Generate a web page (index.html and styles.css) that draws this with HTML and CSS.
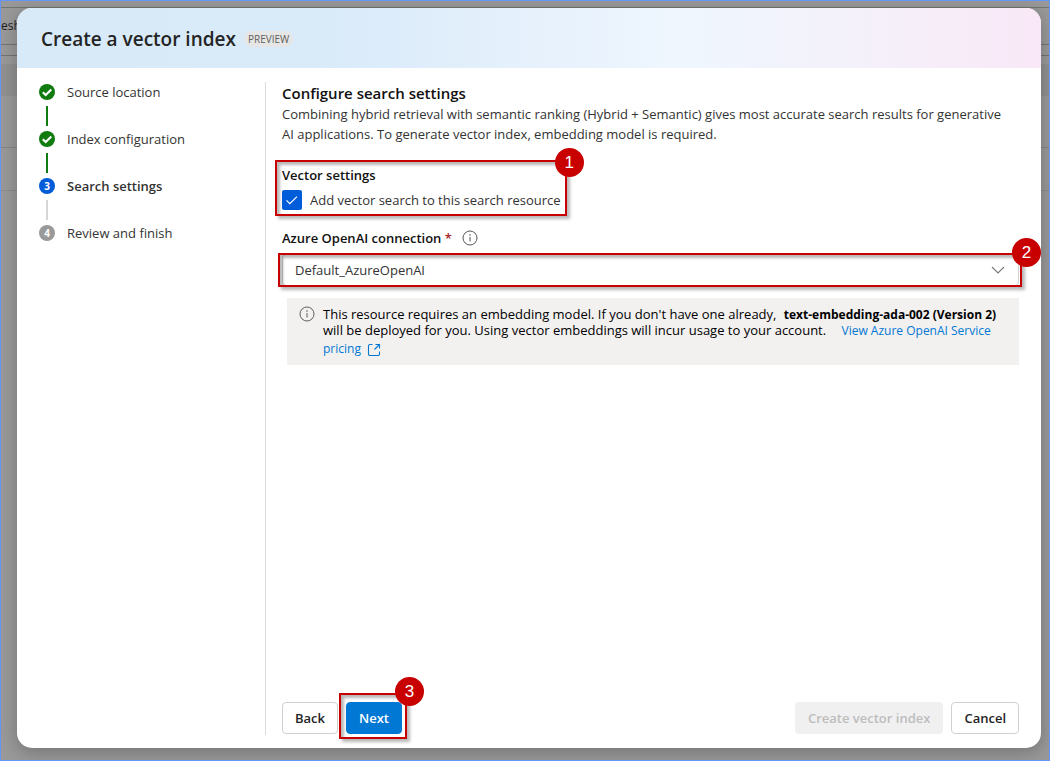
FILE: index.html
```html
<!DOCTYPE html>
<html lang="en">
<head>
<meta charset="utf-8">
<title>Create a vector index</title>
<meta name="viewport" content="width=device-width, initial-scale=1">
<link rel="stylesheet" href="styles.css">
</head>
<body class="page">
<div class="backdrop" aria-hidden="true">
  <div class="backdrop-bar"></div>
  <div class="backdrop-tools"><span class="backdrop-text">esh</span></div>
  <div class="backdrop-gap"></div>
  <div class="backdrop-head"></div>
  <div class="backdrop-row"></div>
</div>
<div class="dialog" role="dialog" aria-labelledby="dialog-title">
  <header class="dialog-header">
    <h1 class="dialog-title" id="dialog-title">Create a vector index</h1>
    <span class="tag">PREVIEW</span>
  </header>
  <div class="dialog-body">
    <ol class="steps">
      <li class="step step-done">
        <svg class="step-icon" viewBox="0 0 16 16"><circle cx="8" cy="8" r="8" fill="#107c10"/><path d="M3.800 8.200l2.900 2.800 5.600-5.600" fill="none" stroke="#fff" stroke-width="2.100"/></svg>
        <span>Source location</span>
      </li>
      <li class="step step-done">
        <svg class="step-icon" viewBox="0 0 16 16"><circle cx="8" cy="8" r="8" fill="#107c10"/><path d="M3.800 8.200l2.900 2.800 5.600-5.600" fill="none" stroke="#fff" stroke-width="2.100"/></svg>
        <span>Index configuration</span>
      </li>
      <li class="step step-current" aria-current="step">
        <span class="step-icon step-number">3</span>
        <span>Search settings</span>
      </li>
      <li class="step">
        <span class="step-icon step-number">4</span>
        <span>Review and finish</span>
      </li>
    </ol>
    <main class="content">
      <h2 class="content-title">Configure search settings</h2>
      <p class="content-text">Combining hybrid retrieval with semantic ranking (Hybrid + Semantic) gives most accurate search results for generative<br>AI applications. To generate vector index, embedding model is required.</p>
      <section class="vector marked">
        <h3 class="label">Vector settings</h3>
        <label class="check">
          <span class="check-box">
            <input class="check-input" type="checkbox" checked>
            <svg class="check-mark" viewBox="0 0 20 20"><path d="M4.500 10.400l3.300 3.300 7.200-7.100" fill="none" stroke="#fff" stroke-width="1.200"/></svg>
          </span>
          <span>Add vector search to this search resource</span>
        </label>
        <span class="frame frame-vector"><span class="pin">1</span></span>
      </section>
      <div class="field-head">
        <label class="label" for="connection">Azure OpenAI connection <span class="required">*</span></label>
        <svg class="info-icon" viewBox="0 0 16 16"><circle cx="8" cy="8" r="7" fill="none" stroke="#555" stroke-width="1"/><path d="M8 7v4.500" stroke="#555" stroke-width="1"/><circle cx="8" cy="5" r=".8" fill="#555"/></svg>
      </div>
      <div class="select-wrap marked">
        <select class="select" id="connection"><option>Default_AzureOpenAI</option></select>
        <svg class="chevron" viewBox="0 0 14 8"><path d="M1 1l6 6 6-6" fill="none" stroke="#777" stroke-width="1.100"/></svg>
        <span class="frame frame-select"><span class="pin pin-select">2</span></span>
      </div>
      <div class="notice">
        <svg class="info-icon" viewBox="0 0 16 16"><circle cx="8" cy="8" r="7" fill="none" stroke="#605e5c" stroke-width="1"/><path d="M8 7v4.500" stroke="#605e5c" stroke-width="1"/><circle cx="8" cy="5" r=".8" fill="#605e5c"/></svg>
        <p class="notice-text">This resource requires an embedding model. If you don't have one already, <strong class="notice-strong">text-embedding-ada-002 (Version 2)</strong><br>will be deployed for you. Using vector embeddings will incur usage to your account. <a class="link" href="#">View Azure OpenAI Service<br>pricing <svg class="link-icon" viewBox="0 0 14 14"><path d="M5.500 1.500H3a1.500 1.500 0 0 0-1.500 1.500v8A1.500 1.500 0 0 0 3 12.500h8a1.500 1.500 0 0 0 1.500-1.500V8.500M8.500 1.500h4v4M12.500 1.500l-5 5" fill="none" stroke="#0078d4" stroke-width="1.100"/></svg></a></p>
      </div>
      <footer class="actions">
        <button class="button" type="button">Back</button>
        <span class="action-next marked">
          <button class="button button-primary" type="button">Next</button>
          <span class="frame frame-next"><span class="pin pin-next">3</span></span>
        </span>
        <button class="button button-create" type="button" disabled>Create vector index</button>
        <button class="button" type="button">Cancel</button>
      </footer>
    </main>
  </div>
</div>
</body>
</html>
```

FILE: styles.css
```css
* {
  box-sizing: border-box;
}

.page {
  position: relative;
  display: flex;
  min-height: 100vh;
  margin: 0;
  padding: 7px 8px 12px 16px;
  border: 1px solid #6495fa;
  background: #999;
  color: #333;
  font: 13px/20px "Open Sans", "Noto Sans", sans-serif;
}

/* Dimmed page behind the dialog */
.backdrop {
  position: absolute;
  inset: 0;
  overflow: hidden;
}

.backdrop-bar {
  height: 7px;
  border-bottom: 1px solid #737373;
}

.backdrop-tools {
  display: flex;
  align-items: center;
  height: 37px;
  border-bottom: 1px solid #737373;
}

.backdrop-text {
  color: #222;
  font-size: 12px;
}

.backdrop-gap {
  height: 11px;
  border-bottom: 1px solid #737373;
}

.backdrop-head {
  height: 92px;
  border-bottom: 1px solid #878787;
  background: linear-gradient(#999 8px, #919191 8px, #919191 40px, #999 40px);
}

.backdrop-row {
  height: 43px;
  border-bottom: 1px solid #8b8b8b;
}

.dialog {
  position: relative;
  display: flex;
  flex: 1;
  flex-direction: column;
  border-radius: 15px;
  background: #fff;
  box-shadow: 0 4px 18px rgba(0, 0, 0, 0.25);
}

.dialog-header {
  display: flex;
  align-items: center;
  gap: 8px;
  height: 60px;
  padding: 2px 24px 0;
  border-radius: 15px 15px 0 0;
  background: linear-gradient(90deg, #d8eaf8 0%, #d9eaf9 30%, #eff6fe 65%, #f4f1fa 82%, #f9e8f7 100%);
}

.dialog-title {
  margin: 0;
  color: #242424;
  font-size: 19px;
  font-weight: 600;
  line-height: 28px;
}

.tag {
  padding: 0 4px;
  border-radius: 8px;
  background: #e6e6e6;
  color: #605e5c;
  font-size: 10px;
  line-height: 16px;
}

.dialog-body {
  display: flex;
  flex: 1;
  padding: 14px 22px 13px;
}

.steps {
  flex: 0 0 226px;
  margin: 0;
  padding: 0;
  list-style: none;
}

.step {
  display: grid;
  grid-template-columns: 16px 1fr;
  gap: 4px 12px;
  align-items: center;
  padding-bottom: 3px;
}

.step:not(:last-child)::after {
  width: 2px;
  height: 20px;
  background: #d6d6d6;
  content: "";
  justify-self: center;
}

.step-done:not(:last-child)::after {
  background: #107c10;
}

.step-current {
  font-weight: 600;
}

.step-icon {
  width: 16px;
  height: 16px;
}

.step-number {
  border-radius: 50%;
  background: #999;
  color: #fff;
  font-size: 10px;
  font-weight: 700;
  line-height: 16px;
  text-align: center;
}

.step-current .step-number {
  background: #015cda;
}

.content {
  display: flex;
  flex: 1;
  flex-direction: column;
  min-width: 0;
  padding: 0 0 0 16px;
  border-left: 1px solid #dcdcdc;
}

.content-title {
  margin: 0;
  color: #111;
  font-size: 15px;
  font-weight: 600;
  line-height: 22px;
}

.content-text {
  margin: 0;
}

.label {
  margin: 0;
  color: #111;
  font-size: 13px;
  font-weight: 600;
  line-height: 20px;
}

.marked {
  position: relative;
}

.vector {
  align-self: flex-start;
  margin-top: 21px;
}

.check {
  display: flex;
  gap: 8px;
  align-items: center;
  margin-top: 5px;
}

.check-box {
  display: grid;
  width: 20px;
  height: 20px;
}

.check-input,
.check-mark {
  grid-area: 1 / 1;
  width: 20px;
  height: 20px;
  margin: 0;
}

.check-input {
  border-radius: 2px;
  background: #015cda;
  appearance: none;
}

.check-mark {
  z-index: 1;
  pointer-events: none;
}

/* Numbered callouts */
.frame {
  position: absolute;
  border: 2px solid #c80000;
  box-shadow: 3px 3px 3px rgba(0, 0, 0, 0.28), inset 3px 3px 3px rgba(0, 0, 0, 0.28);
  pointer-events: none;
}

.frame-vector {
  inset: -5px -6px -6px -7px;
}

.frame-select {
  inset: -1px -3px -1px -4px;
}

.frame-next {
  inset: -9px -5px -5px -7px;
}

.pin {
  position: absolute;
  top: -14px;
  right: -19px;
  width: 29px;
  height: 29px;
  border-radius: 50%;
  background: #c80000;
  color: #fff;
  font: 17px/29px "Liberation Sans", sans-serif;
  text-align: center;
}

.pin-select {
  top: -17px;
  right: -21px;
}

.pin-next {
  top: -18px;
}

.field-head {
  display: flex;
  gap: 10px;
  align-items: center;
  margin-top: 18px;
}

.required {
  color: #a4262c;
}

.info-icon {
  flex: none;
  width: 16px;
  height: 16px;
}

.select-wrap {
  display: grid;
  margin-top: 6px;
}

.select {
  grid-area: 1 / 1;
  width: 100%;
  height: 32px;
  padding: 0 12px;
  border: 1px solid #d1d1d1;
  border-radius: 4px;
  background: #fff;
  color: #333;
  font: inherit;
  appearance: none;
}

.chevron {
  grid-area: 1 / 1;
  align-self: center;
  justify-self: end;
  width: 14px;
  height: 8px;
  margin-right: 14px;
  pointer-events: none;
}

.notice {
  display: flex;
  gap: 8px;
  margin: 12px 0 0 5px;
  padding: 8px 8px 3px 12px;
  background: #f3f1f0;
}

.notice-text {
  margin: 0;
  color: #000;
  font-size: 13px;
  line-height: 16px;
}

.notice-strong {
  margin-left: 4px;
  font-size: 12px;
  font-weight: 700;
  line-height: 14px;
}

.link {
  margin-left: 12px;
  color: #0078d4;
  font-size: 12px;
  line-height: 14px;
  text-decoration: none;
}

.link-icon {
  width: 14px;
  height: 24px;
  margin-left: 3px;
  vertical-align: middle;
}

.actions {
  display: flex;
  gap: 8px;
  margin-top: auto;
  padding-bottom: 1px;
}

.action-next {
  display: flex;
}

.button {
  height: 32px;
  padding: 0 12px;
  border: 1px solid #d1d1d1;
  border-radius: 4px;
  background: #fff;
  color: #242424;
  font: 600 13px/20px "Open Sans", "Noto Sans", sans-serif;
}

.button-primary {
  border-color: #0078d4;
  background: #0078d4;
  color: #fff;
}

.button-create {
  margin-left: auto;
  border-color: #f0f0f0;
  background: #f0f0f0;
  color: #bdbdbd;
}
```
